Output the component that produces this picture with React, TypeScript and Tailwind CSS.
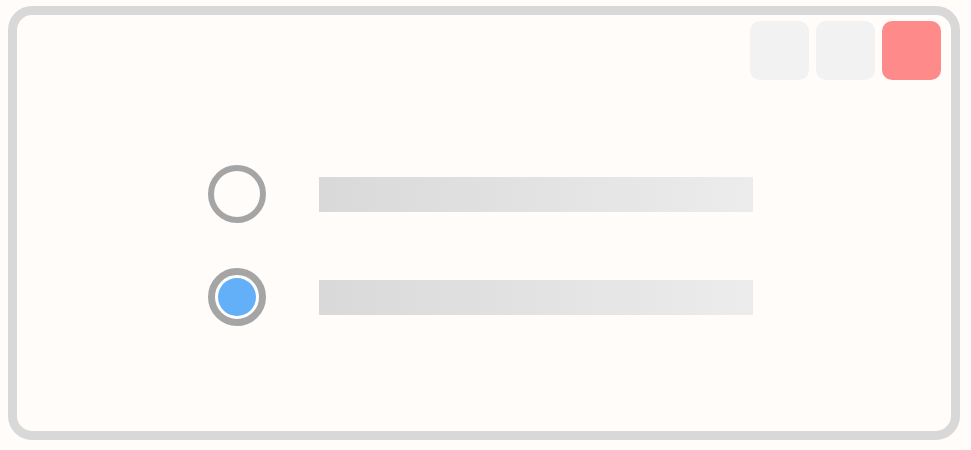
export default function App() {
  const rows = [false, true];
  return (
    <div className="w-[971px] h-[450px] bg-[#fffcf9] pt-[6px] pl-[8px]">
      <div className="w-[952px] h-[434px] border-[9px] border-[#d8d8d8] rounded-[24px] bg-[#fffcf9] flex flex-col pt-[6px] pr-[10px]">
        <div className="flex justify-end gap-[7px]">
          <button className="w-[59px] h-[59px] rounded-[10px] bg-[#f2f2f2]" />
          <button className="w-[59px] h-[59px] rounded-[10px] bg-[#f2f2f2]" />
          <button className="w-[59px] h-[59px] rounded-[10px] bg-[#ff8a8a]" />
        </div>
        <div className="flex flex-col gap-[45px] mt-[85px] pl-[191px]">
          {rows.map((checked, i) => (
            <div key={i} className="flex items-center gap-[53px]">
              {checked ? (
                <div className="w-[58px] h-[58px] rounded-full border-[7px] border-[#a5a5a5] flex items-center justify-center bg-white">
                  <div className="w-[38px] h-[38px] rounded-full bg-[#63aff8]" />
                </div>
              ) : (
                <div className="w-[58px] h-[58px] rounded-full border-[6px] border-[#a5a5a5] bg-[#fffcf9]" />
              )}
              <div className="w-[434px] h-[35px] bg-gradient-to-r from-[#d9d9d9] to-[#ececec]" />
            </div>
          ))}
        </div>
      </div>
    </div>
  );
}
